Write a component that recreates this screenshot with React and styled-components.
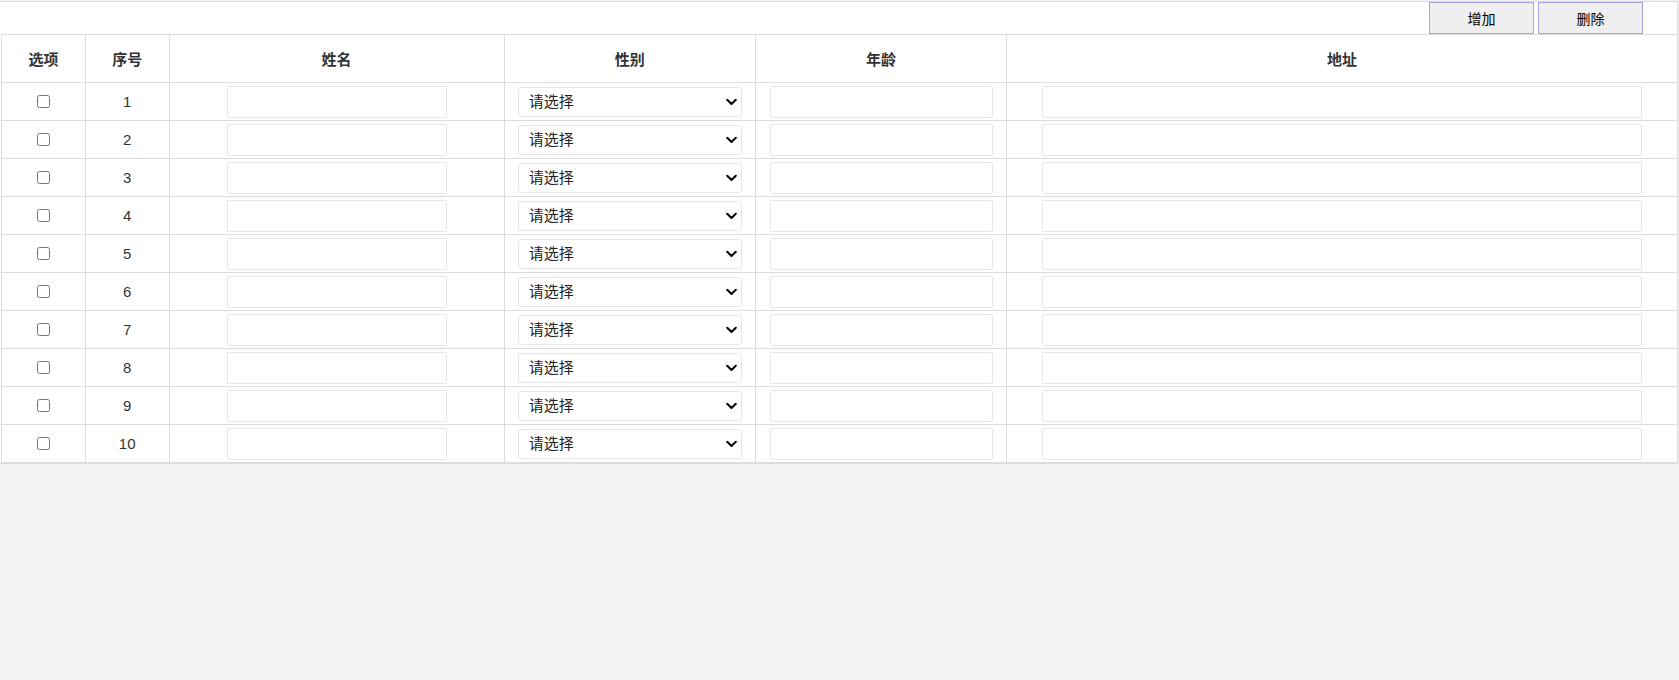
import React from "react";
import styled, { createGlobalStyle } from "styled-components";

const Global = createGlobalStyle`
  html, body { margin: 0; padding: 0; background: #f2f2f2; }
  body {
    font-family: "Liberation Sans", "Noto Sans CJK SC", sans-serif;
    font-size: 15px;
    color: #333;
  }
`;

const Wrapper = styled.div`
  margin-top: 1px;
  margin-right: 1px;
  padding-left: 1px;
  background: #fff;
  border-top: 1px solid #dcdcdc;
  border-right: 1px solid #dcdcdc;
  border-bottom: 1px solid #dcdcdc;
`;

const Toolbar = styled.div`
  display: flex;
  justify-content: flex-end;
  gap: 4px;
  height: 32px;
  padding-right: 34px;
`;

const Button = styled.button`
  box-sizing: border-box;
  width: 105px;
  height: 32px;
  padding: 0;
  border: 1px solid #a7a3dc;
  background: #efefef;
  color: #000;
  font-family: "Liberation Sans", "Noto Sans CJK SC", sans-serif;
  font-size: 14px;
  cursor: pointer;
`;

const Table = styled.table`
  width: 100%;
  border-collapse: collapse;
  table-layout: fixed;
  border-top: 1px solid #dcdcdc;
  border-left: 1px solid #dcdcdc;
  border-bottom: 1px solid #dcdcdc;
`;

const Th = styled.th`
  height: 47px;
  padding: 0;
  border-right: ${(p) => (p.$last ? "none" : "1px solid #dcdcdc")};
  border-bottom: 1px solid #dcdcdc;
  font-weight: bold;
  font-size: 15px;
  color: #333;
  text-align: center;
`;

const Td = styled.td`
  height: 37px;
  padding: 0;
  border-right: ${(p) => (p.$last ? "none" : "1px solid #dcdcdc")};
  border-bottom: 1px solid #dcdcdc;
  text-align: center;
  vertical-align: middle;
  color: #333;
  font-size: 15px;
`;

const TextInput = styled.input`
  box-sizing: border-box;
  width: ${(p) => p.$w}px;
  height: 32px;
  padding: 0 8px;
  border: 1px solid #e6e6e6;
  border-radius: 2px;
  background: #fff;
  vertical-align: middle;
  outline: none;
  font-family: inherit;
  font-size: 15px;
`;

const SelectBox = styled.span`
  position: relative;
  display: inline-block;
  vertical-align: middle;
  width: 224px;
  height: 30px;
`;

const Select = styled.select`
  box-sizing: border-box;
  display: block;
  width: 100%;
  height: 100%;
  padding: 0 22px 0 10px;
  border: 1px solid #e6e6e6;
  border-radius: 3px;
  background: #fff;
  color: #222;
  appearance: none;
  -webkit-appearance: none;
  outline: none;
  font-family: "Liberation Sans", "Noto Sans CJK SC", sans-serif;
  font-size: 15px;
`;

const Chevron = styled.svg`
  position: absolute;
  right: 5px;
  top: 50%;
  width: 11px;
  height: 7px;
  transform: translateY(-50%);
  pointer-events: none;
`;

const columns = [
  { title: "选项", width: "5%" },
  { title: "序号", width: "5%" },
  { title: "姓名", width: "20%" },
  { title: "性别", width: "15%" },
  { title: "年龄", width: "15%" },
  { title: "地址", width: "40%" },
];

const rows = Array.from({ length: 10 }, (_, i) => i + 1);

export default function App() {
  return (
    <>
      <Global />
      <Wrapper>
        <Toolbar>
          <Button type="button">增加</Button>
          <Button type="button">删除</Button>
        </Toolbar>
        <Table>
          <colgroup>
            {columns.map((c) => (
              <col key={c.title} style={{ width: c.width }} />
            ))}
          </colgroup>
          <thead>
            <tr>
              {columns.map((c, i) => (
                <Th key={c.title} $last={i === columns.length - 1}>
                  {c.title}
                </Th>
              ))}
            </tr>
          </thead>
          <tbody>
            {rows.map((n) => (
              <tr key={n}>
                <Td>
                  <input type="checkbox" />
                </Td>
                <Td>{n}</Td>
                <Td>
                  <TextInput $w={220} />
                </Td>
                <Td>
                  <SelectBox>
                    <Select defaultValue="">
                      <option value="">请选择</option>
                      <option value="m">男</option>
                      <option value="f">女</option>
                    </Select>
                    <Chevron viewBox="0 0 11 7" aria-hidden="true">
                      <path
                        d="M1.2 1.2 L5.5 5.5 L9.8 1.2"
                        fill="none"
                        stroke="#000"
                        strokeWidth="2"
                        strokeLinecap="round"
                        strokeLinejoin="round"
                      />
                    </Chevron>
                  </SelectBox>
                </Td>
                <Td>
                  <TextInput $w={223} />
                </Td>
                <Td $last>
                  <TextInput $w={600} />
                </Td>
              </tr>
            ))}
          </tbody>
        </Table>
      </Wrapper>
    </>
  );
}
